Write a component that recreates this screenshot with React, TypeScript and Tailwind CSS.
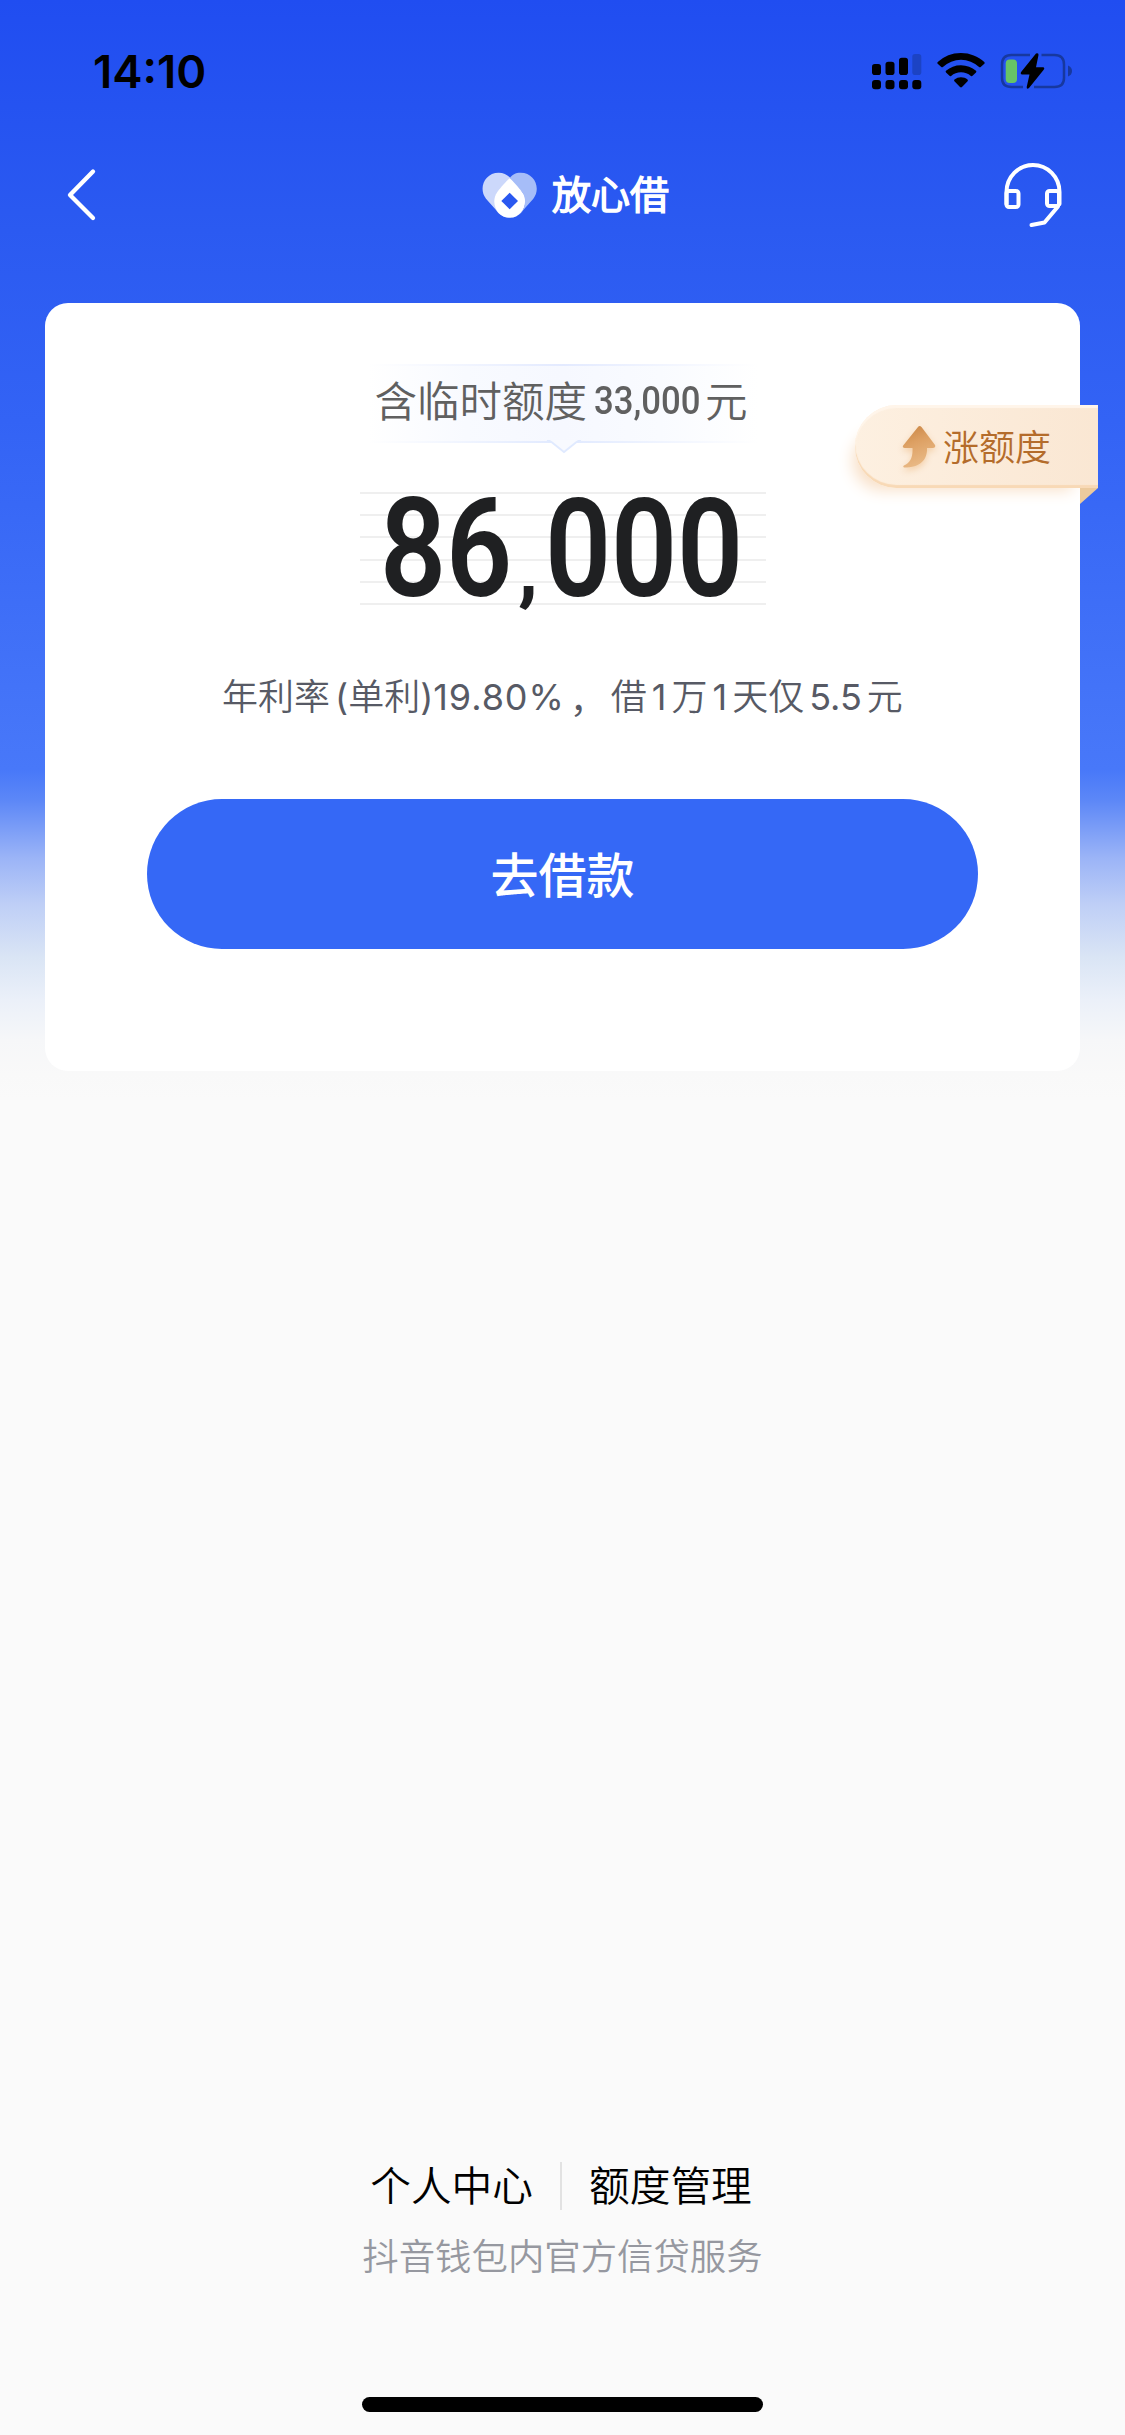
import type { ReactNode } from "react";

// Barras de señal (SIM 1 arriba, SIM 2 abajo)
const SIGNAL_BARS = [
  { x: 0, y: 10, h: 11, off: false },
  { x: 13.5, y: 7.7, h: 13.3, off: false },
  { x: 27, y: 3.7, h: 17.3, off: false },
  { x: 40.3, y: 0, h: 21, off: true },
];

const AMOUNT = "86,000";

const FOOTER_LINKS = ["个人中心", "额度管理"];

function SignalIcon() {
  return (
    <svg width="50" height="36" viewBox="0 0 50 36" aria-hidden>
      {SIGNAL_BARS.map((b) => (
        <g key={b.x}>
          <rect
            x={b.x}
            y={b.y}
            width="9"
            height={b.h}
            rx="2.8"
            fill={b.off ? "#1c43c4" : "#000"}
          />
          <rect x={b.x} y="26" width="9" height="9.3" rx="3" />
        </g>
      ))}
    </svg>
  );
}

function WifiIcon() {
  return (
    <svg width="48" height="36" viewBox="0 0 48 36" aria-hidden>
      <path d="M24 0C33 0 41.200 3.400 47.300 9.100Q48 9.900 47.300 10.700L43.700 14Q42.900 14.600 42.100 14A26.500 26.500 0 0 0 5.900 14Q5.100 14.600 4.300 14L.7 10.700Q0 9.900.7 9.100A34 34 0 0 1 24 0Z" />
      <path d="M24 12.200C29.700 12.200 35 14.300 39 17.800Q39.800 18.600 39 19.400L35.500 22.800Q34.700 23.500 33.900 22.900A15 15 0 0 0 14.100 22.900Q13.300 23.500 12.500 22.800L9 19.400Q8.200 18.600 9 17.800A22.500 22.500 0 0 1 24 12.200Z" />
      <path d="M24 24.300C26.500 24.300 28.800 25.100 30.500 26.500Q31.400 27.300 30.600 28.200L25 34Q24 34.900 23 34L17.400 28.200Q16.600 27.300 17.500 26.500A10.500 10.500 0 0 1 24 24.300Z" />
    </svg>
  );
}

function BatteryIcon() {
  return (
    <svg width="73" height="38" viewBox="0 0 73 38" aria-hidden>
      <path
        d="M30 3H11.500Q2 3 2 12.500V26Q2 35 11.500 35H23M41.500 3H54.500Q64 3 64 12.500V26Q64 35 54.500 35H34"
        fill="none"
        stroke="#17389f"
        strokeWidth="2.500"
      />
      <path d="M68 13.500Q72 15 72 19T68 24.500Z" fill="#17389f" />
      <rect x="5.700" y="7.500" width="11.300" height="23.500" rx="4" fill="#67c466" />
      <path d="M36 1.500Q38.800.6 38.500 3L36 15.300H43Q45.300 15.800 43.500 18L29 36Q26.600 38 26.700 35L29.500 22.500H21.800Q19.800 21.800 21.500 19.500Z" />
    </svg>
  );
}

function HeadsetIcon() {
  return (
    <svg
      className="mt-px"
      width="62"
      height="68"
      viewBox="0 0 62 68"
      fill="none"
      stroke="#fff"
      strokeWidth="4"
      strokeLinecap="round"
      strokeLinejoin="round"
      aria-hidden
    >
      <path d="M4.500 42V30A26.500 27 0 0 1 57.500 30V42" />
      <rect x="4.500" y="29" width="12" height="16" rx="2.500" />
      <rect x="45" y="29" width="12" height="15" rx="2.500" />
      <path d="M56 44.500 42.500 60.500 29.500 63" />
    </svg>
  );
}

function HeartLogo() {
  return (
    <svg width="60" height="50" viewBox="90 60 180 150" aria-hidden>
      <path
        d="M146 68C162 68 172 74 184 87L222 135C232 160 216 200 180 202C160 202 146 193 138 180L108 146C84 115 104 68 146 68Z"
        fill="#ccd8fb"
      />
      <path
        d="M212 68C196 68 186 74 179 85L216 126C238 156 218 203 179 203C198 202 212 193 220 180L250 146C274 115 254 68 212 68Z"
        fill="#a6bdf8"
      />
      <path
        d="M179 85C190 94 205 112 216 126C238 156 218 203 179 203S120 156 142 126C153 112 168 94 179 85Z"
        fill="#fff"
      />
      <path d="M179 128 204 153 179 178 154 153Z" fill="#2a58f0" />
    </svg>
  );
}

function ArrowUpIcon() {
  return (
    <svg
      className="drop-shadow-[0_3px_3px_#f3cfa8]"
      width="36"
      height="46"
      viewBox="0 0 36 46"
      aria-hidden
    >
      <defs>
        <linearGradient id="arrow" x1="0" y1="0" x2="0.3" y2="1">
          <stop offset="0" stopColor="#c98443" />
          <stop offset="0.450" stopColor="#dda063" />
          <stop offset="1" stopColor="#e9b985" />
        </linearGradient>
      </defs>
      <path
        d="M17 3Q18.500 1 20.500 3L34 21Q35 23.500 32 24H26C26.500 35 20 43.500 3 43.500Q1.500 42.500 3 41.500C9 39 12 34 11.500 24H3.500Q1 23.500 2.200 21.500Z"
        fill="url(#arrow)"
      />
    </svg>
  );
}

// Dígitos estrechos tipo DIN
function Digits({ children, className }: { children: ReactNode; className: string }) {
  return (
    <span className={`inline-block whitespace-nowrap font-['Roboto',sans-serif] ${className}`}>
      {children}
    </span>
  );
}

function StatusBar() {
  return (
    <div className="flex h-[140px] items-start justify-between pl-[93px] pr-[52px]">
      <span className="pt-[45px] font-['Inter',sans-serif] text-[45.500px] leading-[54px] font-semibold text-black">
        14:10
      </span>
      <div className="flex items-start pt-[52px]">
        <div className="mr-[15px] pt-[2px]">
          <SignalIcon />
        </div>
        <div className="mr-[15px] pt-px">
          <WifiIcon />
        </div>
        <BatteryIcon />
      </div>
    </div>
  );
}

function NavBar() {
  return (
    <header className="flex h-[110px] items-center justify-between px-[61px]">
      <svg width="62" height="58" viewBox="0 0 62 58" fill="none" aria-hidden>
        <path
          d="M32 5.500 9 29 32 52"
          stroke="#fff"
          strokeWidth="4.300"
          strokeLinecap="round"
          strokeLinejoin="round"
        />
      </svg>
      <h1 className="ml-[24px] flex items-center gap-[12px]">
        <HeartLogo />
        <span className="pb-[6px] text-[39px] leading-[50px] font-[350] text-white [-webkit-text-stroke:1.600px_#fff]">
          放心借
        </span>
      </h1>
      <HeadsetIcon />
    </header>
  );
}

function TempLimitTip() {
  return (
    <div className="relative flex h-[79px] w-[390px] items-center justify-center bg-[linear-gradient(to_right,#fff,#f8faff_25%,#f6f8ff_50%,#f9fbff_75%,#fff)]">
      <span className="absolute inset-x-0 top-0 h-[2px] bg-linear-to-r from-white via-[#e3eaff] to-white" />
      <span className="absolute inset-x-0 bottom-0 h-[2px] bg-linear-to-r from-white via-[#e0e9ff] to-white" />
      <svg className="absolute top-[76px] left-[178px]" width="36" height="14" viewBox="0 0 36 14" aria-hidden>
        <path d="M1 0Q5 1 8 4L18 12 28 4Q31 1 35 0" fill="#f8faff" stroke="#e0eaff" strokeWidth="1.800" />
      </svg>
      <p className="flex items-center pr-[3px] pb-[9px] text-[42.500px] leading-[60px] font-[350] text-[#606060]">
        含临时额度
        <Digits className="mt-[4px] ml-[7px] w-[106px] origin-left scale-x-[0.890] text-[39px] font-medium">
          33,000
        </Digits>
        <span className="ml-[5px]">元</span>
      </p>
    </div>
  );
}

function LimitAmount() {
  return (
    <div className="h-[113px] w-[406px] bg-[repeating-linear-gradient(to_bottom,#efefef_0_2px,transparent_2px_22.200px)] pl-[20px]">
      <Digits className="text-[138px] leading-[115px] font-semibold text-[#1f2022]">
        {AMOUNT.split("").map((char, i) =>
          char === "," ? (
            <span key={i} className="inline-block w-[33px] text-center text-[82px] leading-none font-bold">
              {char}
            </span>
          ) : (
            <span key={i} className="inline-flex w-[66px] scale-x-[0.840] justify-center">
              {char}
            </span>
          )
        )}
      </Digits>
    </div>
  );
}

function RaiseLimitRibbon() {
  return (
    <div className="absolute top-[102px] right-[-18px]">
      <button className="flex h-[83px] w-[243px] items-center rounded-l-full rounded-tr-[6px] bg-linear-to-r from-[#fdf0e1] to-[#fae7d3] pl-[46px] text-[36px] leading-none text-[#b46c2b] shadow-[inset_0_-3px_1px_#f8d9b6,inset_0_3px_1px_#fff5ea,-14px_14px_16px_-12px_#f8dfc6]">
        <ArrowUpIcon />
        <span className="ml-[6px] pb-[4px] font-[350]">涨额度</span>
      </button>
      <svg className="ml-auto block" width="18" height="17" viewBox="0 0 18 17" aria-hidden>
        <path d="M0 0H18L0 16Z" fill="#ecca9d" />
      </svg>
    </div>
  );
}

function RateLine() {
  return (
    <p className="flex h-[52px] w-[681px] items-center justify-between font-['Inter','Noto_Sans_CJK_SC',sans-serif] text-[36px] leading-[52px] whitespace-nowrap text-[#575a65]">
      <span className="font-[350]">年利率</span>
      <span>
        (<span className="font-[350]">单利</span>)<span className="tracking-[0.900px]">19.80%</span>
      </span>
      <span className="font-['Noto_Sans_CJK_SC',sans-serif]">，</span>
      <span className="font-[350]">借</span>
      <span>1</span>
      <span className="font-[350]">万</span>
      <span>1</span>
      <span className="font-[350]">天仅</span>
      <span>5.5</span>
      <span className="font-[350]">元</span>
    </p>
  );
}

export default function App() {
  return (
    <div className="flex h-[2435px] w-[1125px] flex-col bg-[#fafafa] bg-[linear-gradient(to_bottom,#204df1_0px,#2b5af1_230px,#3363f5_420px,#4878f9_770px,#5c87f7_800px,#9bb4f7_858px,#bfcff6_905px,#dae5f5_958px,#ebf0f9_1000px,#f6f7f9_1040px,#f9f9f9_1075px,#fafafa_1100px)] font-['Noto_Sans_CJK_SC',sans-serif]">
      <StatusBar />
      <NavBar />

      {/* Tarjeta de cupo disponible */}
      <main className="relative mx-[45px] mt-[53px] flex h-[768px] flex-col items-center rounded-[23px] bg-white pt-[61px]">
        <RaiseLimitRibbon />
        <TempLimitTip />
        <div className="mt-[49px]">
          <LimitAmount />
        </div>
        <div className="mt-[66px]">
          <RateLine />
        </div>
        <button className="mt-[76px] h-[150px] w-[831px] rounded-full bg-[#3568f6] pb-[5px] text-[48px] font-medium text-white">
          去借款
        </button>
      </main>

      {/* Pie */}
      <footer className="mt-auto flex flex-col items-center">
        <nav className="flex items-center pr-[3px] text-[40.700px] leading-[60px] font-[350] text-black">
          <a className="pb-[4px]">{FOOTER_LINKS[0]}</a>
          <span className="mx-[27px] h-[48px] w-[2px] bg-[#e2e2e2]" />
          <a className="pb-[4px]">{FOOTER_LINKS[1]}</a>
        </nav>
        <p className="mt-[10px] text-[36.400px] leading-[52px] font-[350] text-[#9698a0]">
          抖音钱包内官方信贷服务
        </p>
        <div className="mt-[117px] mb-[23px] h-[15px] w-[401px] rounded-full bg-black" />
      </footer>
    </div>
  );
}
